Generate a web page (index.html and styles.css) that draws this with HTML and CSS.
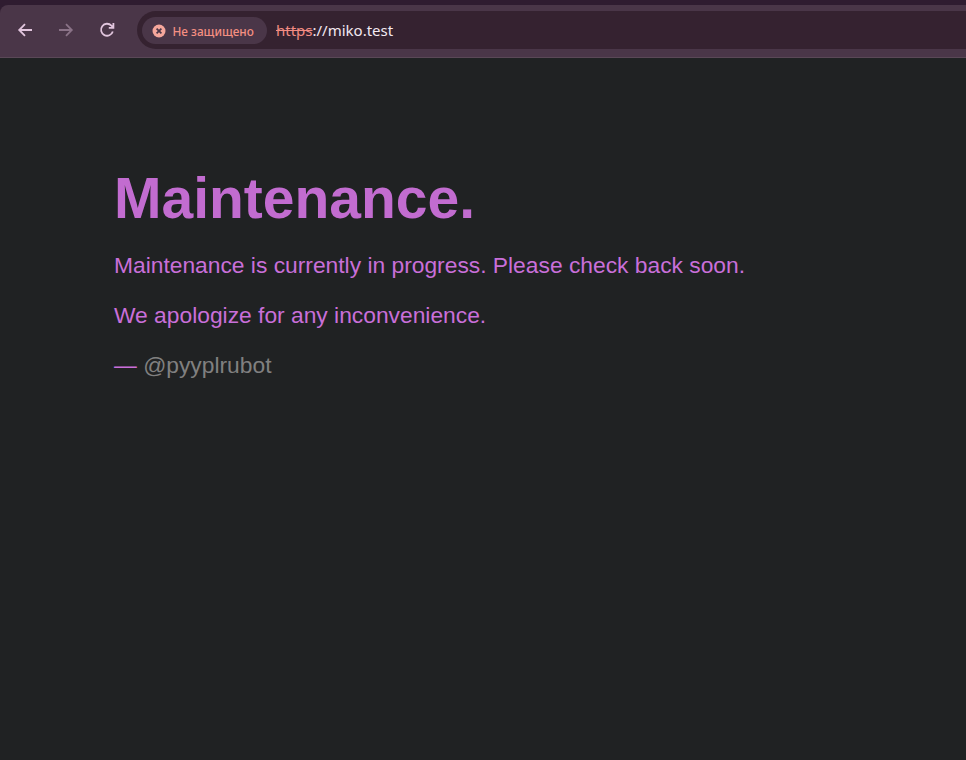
FILE: index.html
```html
<!DOCTYPE html>
<html lang="en">
<head>
<meta charset="utf-8">
<title>Maintenance</title>
<link rel="stylesheet" href="styles.css">
</head>
<body>
<header class="browser">
  <div class="toolbar">
    <button class="nav"><svg viewBox="0 0 16 16" width="16" height="16"><path d="M15 8H2.5M8 2.2 2.2 8 8 13.8" class="ic"/></svg></button>
    <button class="nav dim"><svg viewBox="0 0 16 16" width="16" height="16"><path d="M1 8h12.5M8 2.2 13.8 8 8 13.8" class="ic"/></svg></button>
    <button class="nav"><svg viewBox="0 0 16 16" width="16" height="16"><path d="M13.8 9.5A6 6 0 1 1 12.4 3.6L14 5.3M14.4 1v4.8H9.8" class="ic"/></svg></button>
    <div class="omnibox">
      <div class="chip">
        <svg class="chip-icon" viewBox="0 0 14 14" width="14" height="14"><circle cx="7" cy="7" r="6.5" class="ic-fill"/><path d="M4.6 4.6l4.8 4.8M9.4 4.6 4.6 9.4" class="ic-x"/></svg>
        <span>Не защищено</span>
      </div>
      <div class="url"><s>https</s><span class="rest">://miko.test</span></div>
    </div>
  </div>
</header>
<main class="page">
  <h1>Maintenance.</h1>
  <p>Maintenance is currently in progress. Please check back soon.</p>
  <p>We apologize for any inconvenience.</p>
  <p>— <span class="author">@pyyplrubot</span></p>
</main>
</body>
</html>
```
FILE: styles.css
```css
* { box-sizing: border-box; }
html, body { margin: 0; height: 100%; }
body { background: #202223; overflow: hidden; font-family: "Liberation Sans", Arial, sans-serif; }
.browser { background: #2f1c30; padding-top: 5px; }
.toolbar {
  height: 53px; background: #4a3648; border-bottom: 1px solid #5a4857;
  border-top-left-radius: 8px; display: flex; align-items: center;
  padding: 0 0 2px 4px;
}
.nav {
  width: 41px; height: 34px; background: none; border: 0; padding: 0;
  display: flex; align-items: center; justify-content: center;
}
.nav.dim { opacity: .42; }
.ic { fill: none; stroke: #e2c6de; stroke-width: 1.8; }
.omnibox {
  flex: 1; height: 38px; margin-left: 10px; background: #352230;
  border-radius: 19px 0 0 19px; display: flex; align-items: center; padding-left: 5px;
}
.chip {
  height: 27px; width: 125px; border-radius: 14px; background: #4a3648; display: flex;
  align-items: center; padding: 1px 0 0 9.5px; gap: 7px; color: #f58f82;
  font: 500 11.8px "Noto Sans", sans-serif; white-space: nowrap;
}
.ic-fill { fill: #f6a79c; }
.ic-x { stroke: #4a3648; stroke-width: 1.7; fill: none; }
.url { margin-left: 9px; font: 15px "Noto Sans", sans-serif; color: #f28b82; }
.url .rest { color: #f3e8f0; }
.page { padding: 108px 0 0 114px; color: #c96fd9; }
h1 { margin: 0 0 21px; font-size: 57px; line-height: 64px; font-weight: 700; color: #c26cd0; }
p { margin: 0 0 22px; font-size: 22.8px; line-height: 28px; }
.author { color: #808080; }
```
